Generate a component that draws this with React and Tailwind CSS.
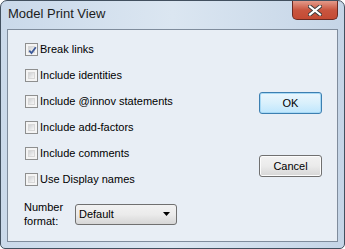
import React from "react";

function Check({ checked }) {
  return (
    <div className="w-[13px] h-[13px] border border-[#8e8f8f] bg-[#f4f4f4] p-[2px] shrink-0">
      <div className="w-full h-full bg-gradient-to-br from-[#cfd1d4] to-[#f7f7f7] border border-[#d8d8d8] relative">
        {checked && (
          <svg viewBox="0 0 9 9" className="absolute -left-[1px] -top-[1px] w-[9px] h-[9px]">
            <path d="M1.3 4.6 L3.5 7 L7.8 1.2" stroke="#3d5a9a" strokeWidth="1.8" fill="none" />
          </svg>
        )}
      </div>
    </div>
  );
}

function Row({ label, checked }) {
  return (
    <div className="flex items-center h-[13px] gap-[2px]">
      <Check checked={checked} />
      <span className="leading-none text-black">{label}</span>
    </div>
  );
}

export default function App() {
  return (
    <div
      className="w-[345px] h-[249px] rounded-t-[7px] rounded-b-[5px] border border-[#42505f] flex flex-col overflow-hidden bg-gradient-to-r from-[#cad9ea] via-[#dbe6f1] to-[#c5d5e7]"
      style={{ fontFamily: '"Liberation Sans", Arial, sans-serif' }}
    >
      <div className="h-[28px] flex items-start shrink-0">
        <div className="pl-[7px] pt-[5px] text-[13px] leading-[16px] text-[#1c1c1c]">Model Print View</div>
        <div className="ml-auto mr-[6px] w-[46px] h-[19px] rounded-b-[5px] border border-t-0 border-[#6b2a22] bg-gradient-to-b from-[#e39a8a] via-[#c9553f] to-[#c44a33] flex items-center justify-center">
          <svg viewBox="0 0 14 11" className="w-[14px] h-[11px]">
            <path d="M2 1.5 L12 9.5 M12 1.5 L2 9.5" stroke="#3b3b3b" strokeWidth="4" strokeLinecap="square" />
            <path d="M2 1.5 L12 9.5 M12 1.5 L2 9.5" stroke="#ffffff" strokeWidth="2.2" strokeLinecap="square" />
          </svg>
        </div>
      </div>
      <div className="flex-1 mx-[6px] mb-[6px] border border-[#7f8c9c] bg-[#e8eef5] flex text-[11px]">
        <div className="flex-1 pl-[17px] pt-[13px] flex flex-col">
          <div className="flex flex-col gap-[13px]">
            <Row label="Break links" checked />
            <Row label="Include identities" />
            <Row label="Include @innov statements" />
            <Row label="Include add-factors" />
            <Row label="Include comments" />
            <Row label="Use Display names" />
          </div>
          <div className="mt-[14px] flex items-center">
            <div className="w-[51px] leading-[14px] text-black -ml-[1px]">
              Number
              <br />
              format:
            </div>
            <div className="w-[102px] h-[21px] rounded-[3px] border border-[#707070] bg-gradient-to-b from-[#f2f2f2] via-[#ebebeb] to-[#d6d6d6] flex items-center pl-[3px] pr-[6px]">
              <span className="text-black">Default</span>
              <svg viewBox="0 0 7 4" className="ml-auto w-[7px] h-[4px]">
                <path d="M0 0 H7 L3.5 4 Z" fill="#000" />
              </svg>
            </div>
          </div>
        </div>
        <div className="w-[95px] pr-[15px] pt-[62px] flex flex-col items-end">
          <button className="w-[63px] h-[22px] rounded-[3px] border border-[#3c7fb1] bg-gradient-to-b from-[#eaf6fd] via-[#d9f0fc] to-[#bee6fd] shadow-[inset_0_0_0_1px_#a7d9f5] text-black text-[11px] leading-none">
            OK
          </button>
          <button className="mt-[41px] w-[63px] h-[22px] rounded-[3px] border border-[#707070] bg-gradient-to-b from-[#f2f2f2] via-[#ebebeb] to-[#d6d6d6] shadow-[inset_0_0_0_1px_#fcfcfc] text-black text-[11px] leading-none">
            Cancel
          </button>
        </div>
      </div>
    </div>
  );
}
